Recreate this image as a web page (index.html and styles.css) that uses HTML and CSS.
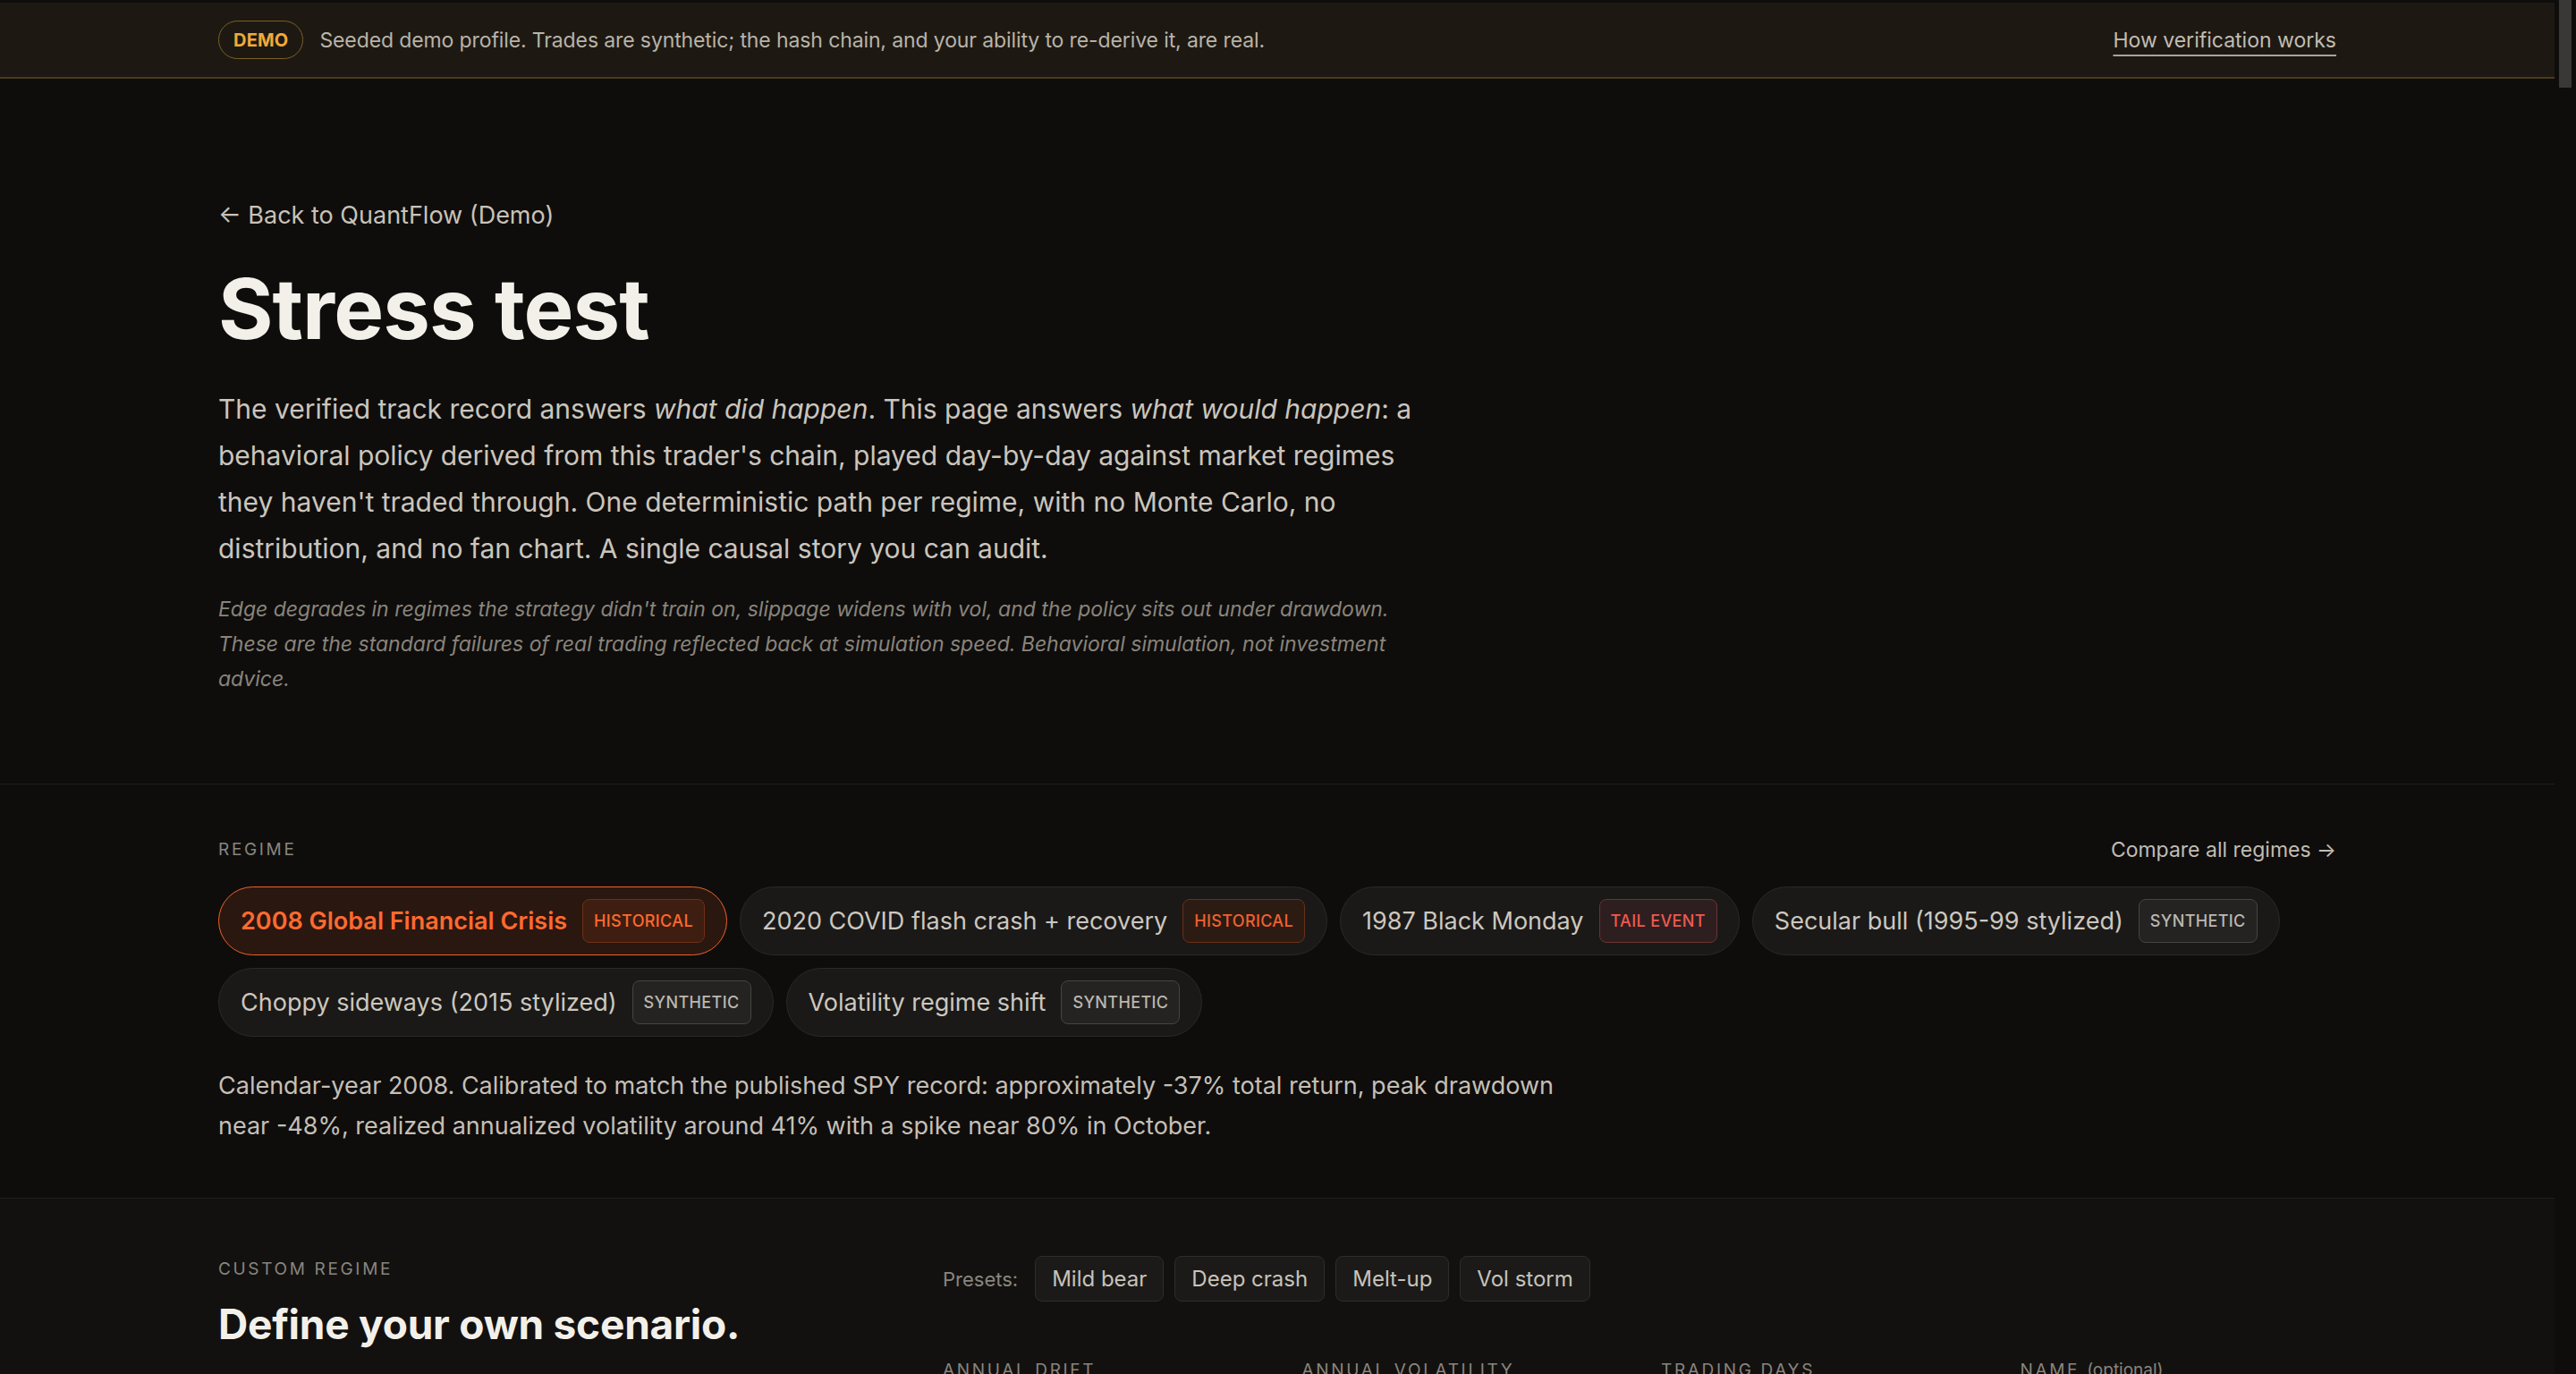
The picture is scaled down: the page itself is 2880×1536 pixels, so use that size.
FILE: index.html
```html
<!DOCTYPE html>
<html lang="en">
<head>
<meta charset="utf-8">
<title>Stress test — QuantFlow (Demo)</title>
<link rel="stylesheet" href="styles.css">
</head>
<body>
<div class="page">
  <div class="banner">
    <div class="container banner-inner">
      <div class="banner-left">
        <span class="demo-pill">DEMO</span>
        <span class="banner-text">Seeded demo profile. Trades are synthetic; the hash chain, and your ability to re-derive it, are real.</span>
      </div>
      <a class="banner-link" href="#">How verification works</a>
    </div>
  </div>

  <section class="intro">
    <div class="container">
      <a class="back" href="#">← Back to QuantFlow (Demo)</a>
      <h1 class="title">Stress test</h1>
      <p class="lead">The verified track record answers <em>what did happen</em>. This page answers <em>what would happen</em>: a behavioral policy derived from this trader's chain, played day-by-day against market regimes they haven't traded through. One deterministic path per regime, with no Monte Carlo, no distribution, and no fan chart. A single causal story you can audit.</p>
      <p class="note">Edge degrades in regimes the strategy didn't train on, slippage widens with vol, and the policy sits out under drawdown. These are the standard failures of real trading reflected back at simulation speed. Behavioral simulation, not investment advice.</p>
    </div>
  </section>

  <section class="regimes">
    <div class="container">
      <div class="regimes-head">
        <span class="eyebrow">Regime</span>
        <a class="compare" href="#">Compare all regimes →</a>
      </div>
      <div class="chips">
        <button class="chip chip-active"><span>2008 Global Financial Crisis</span><span class="badge badge-hist-active">Historical</span></button>
        <button class="chip"><span>2020 COVID flash crash + recovery</span><span class="badge badge-hist">Historical</span></button>
        <button class="chip"><span>1987 Black Monday</span><span class="badge badge-tail">Tail event</span></button>
        <button class="chip"><span>Secular bull (1995-99 stylized)</span><span class="badge badge-synth">Synthetic</span></button>
        <button class="chip"><span>Choppy sideways (2015 stylized)</span><span class="badge badge-synth">Synthetic</span></button>
        <button class="chip"><span>Volatility regime shift</span><span class="badge badge-synth">Synthetic</span></button>
      </div>
      <p class="desc">Calendar-year 2008. Calibrated to match the published SPY record: approximately -37% total return, peak drawdown near -48%, realized annualized volatility around 41% with a spike near 80% in October.</p>
    </div>
  </section>

  <section class="custom">
    <div class="container custom-grid">
      <div class="custom-left">
        <span class="eyebrow">Custom regime</span>
        <h2 class="custom-title">Define your own scenario.</h2>
      </div>
      <div class="custom-right">
        <div class="presets">
          <span class="presets-label">Presets:</span>
          <button class="preset">Mild bear</button>
          <button class="preset">Deep crash</button>
          <button class="preset">Melt-up</button>
          <button class="preset">Vol storm</button>
        </div>
        <div class="fields">
          <label class="field"><span class="field-label">Annual drift</span><input class="field-input" value="-10%"></label>
          <label class="field"><span class="field-label">Annual volatility</span><input class="field-input" value="35%"></label>
          <label class="field"><span class="field-label">Trading days</span><input class="field-input" value="252"></label>
          <label class="field"><span class="field-label">Name <span class="opt">(optional)</span></span><input class="field-input" value=""></label>
        </div>
      </div>
    </div>
  </section>
</div>
<div class="scrollbar"><div class="scrollbar-thumb"></div></div>
</body>
</html>
```

FILE: styles.css
```css
* { box-sizing: border-box; margin: 0; padding: 0; }
html, body { height: 100%; overflow: hidden; background: #0e0d0c; }
body { font-family: Inter, "Noto Sans", sans-serif; color: #cbc5bc; }
a { color: inherit; text-decoration: none; }
button { font-family: inherit; cursor: pointer; }

.page { margin-right: 24px; padding-top: 3px; height: 100%; }
.container { width: 2368px; margin: 0 auto; }

.scrollbar { position: fixed; top: 0; right: 0; width: 24px; height: 100%; background: #0e0d0c; }
.scrollbar-thumb { position: absolute; top: 0; left: 5px; width: 14px; height: 98px; background: #3a3837; }

/* banner */
.banner { background: #1d1912; border-bottom: 2px solid #4a3b1f; }
.banner-inner { display: flex; align-items: center; justify-content: space-between; height: 83px; }
.banner-left { display: flex; align-items: center; gap: 18px; }
.demo-pill { display: flex; align-items: center; height: 43px; padding: 0 16px; border: 1.5px solid #7c5f25; border-radius: 999px; color: #f2a93b; font-weight: 700; font-size: 20px; letter-spacing: 0.01em; }
.banner-text { font-size: 23px; letter-spacing: -0.005em; color: #b9b3a9; }
.banner-link { font-size: 23px; color: #c2bcb2; text-decoration: underline; text-underline-offset: 8px; text-decoration-thickness: 1.5px; text-decoration-color: #a9a39a; }

/* intro */
.intro { padding: 133px 0 97px; border-bottom: 1px solid #221f1c; }
.back { display: block; font-size: 27px; line-height: 40px; color: #c8c2b9; }
.title { margin-top: 33px; font-size: 94px; line-height: 103px; font-weight: 700; letter-spacing: -0.01em; color: #f3f0ea; }
.lead { margin-top: 34px; max-width: 1360px; font-size: 30px; line-height: 52px; color: #cbc5bc; }
.lead em { font-style: italic; }
.note { margin-top: 23px; max-width: 1330px; font-size: 23px; line-height: 39px; font-style: italic; color: #8a847b; }

/* regimes */
.regimes { padding: 58px 0; border-bottom: 1px solid #221f1c; }
.regimes-head { display: flex; justify-content: space-between; align-items: center; height: 30px; }
.eyebrow { display: block; font-size: 19px; line-height: 30px; letter-spacing: 0.14em; text-transform: uppercase; color: #8a857d; }
.compare { font-size: 23px; color: #c2bcb2; }
.chips { display: flex; flex-wrap: wrap; gap: 14px; margin-top: 26px; }
.chip { display: flex; align-items: center; gap: 17px; padding: 13px 24px; border: 1px solid #2b2927; border-radius: 999px; background: #1a1918; font-size: 27px; color: #cdc7be; }
.chip-active { border-color: #f0622a; background: #2a170f; color: #ff6a30; font-weight: 600; }
.badge { font-size: 18px; line-height: 23px; padding: 12px 12px; border: 1px solid; border-radius: 8px; letter-spacing: 0.02em; text-transform: uppercase; font-weight: 500; }
.badge-hist-active { background: #3e1e10; border-color: #6e3015; color: #ff6a30; }
.badge-hist { background: #2c1b13; border-color: #6a3017; color: #f0612f; }
.badge-tail { background: #2d1f1f; border-color: #6b3333; color: #ee5a50; }
.badge-synth { background: #242322; border-color: #474442; color: #bdb7ae; }
.desc { margin-top: 32px; max-width: 1500px; font-size: 27px; line-height: 45px; color: #c5bfb6; }

/* custom */
.custom { background: #121110; padding: 64px 0; }
.custom-grid { display: grid; grid-template-columns: 778px minmax(0, 1fr); gap: 32px; }
.custom-title { margin-top: 21px; font-size: 46px; line-height: 51px; font-weight: 700; letter-spacing: -0.005em; color: #f3f0ea; }
.presets { display: flex; align-items: center; gap: 12px; height: 51px; }
.presets-label { font-size: 22px; color: #8a857d; margin-right: 7px; }
.preset { display: flex; align-items: center; height: 51px; padding: 0 18px; border: 1px solid #2f2d2b; border-radius: 8px; background: #1b1a19; color: #c8c2b9; font-size: 24px; }
.fields { display: grid; grid-template-columns: repeat(4, minmax(0, 1fr)); gap: 48px; margin-top: 62px; }
.field { display: flex; flex-direction: column; gap: 12px; min-width: 0; }
.field-label { font-size: 19px; line-height: 30px; letter-spacing: 0.14em; text-transform: uppercase; color: #8a857d; white-space: nowrap; }
.field-label .opt { text-transform: none; letter-spacing: 0; }
.field-input { width: 100%; min-width: 0; height: 56px; padding: 0 16px; border: 1px solid #2f2d2b; border-radius: 8px; background: #1b1a19; color: #e0dad1; font-family: inherit; font-size: 24px; }
```
